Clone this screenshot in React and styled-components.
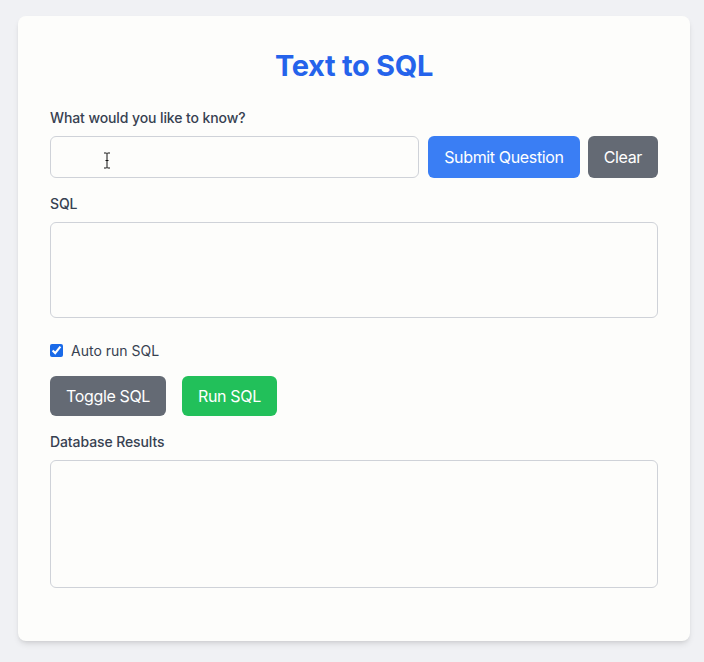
import React, { useState } from 'react';
import styled, { createGlobalStyle } from 'styled-components';

const GlobalStyle = createGlobalStyle`
  body {
    margin: 0;
    padding: 0;
    background: #f0f1f4;
    font-family: Inter, 'Liberation Sans', sans-serif;
    color: #374151;
  }
  * { box-sizing: border-box; }
`;

const Page = styled.div`
  padding: 16px 14px 20px 18px;
  min-height: 662px;
`;

const Card = styled.div`
  max-width: 672px;
  margin: 0 auto;
  background: #fdfdfb;
  border-radius: 8px;
  box-shadow: 0 4px 6px -1px rgba(0, 0, 0, 0.1), 0 2px 4px -2px rgba(0, 0, 0, 0.1);
  padding: 32px 32px 53px;
`;

const Title = styled.h1`
  margin: 0 0 24px;
  text-align: center;
  font-size: 29px;
  line-height: 36px;
  font-weight: 700;
  letter-spacing: -0.3px;
  color: #2563eb;
`;

const Label = styled.div`
  font-size: 14px;
  line-height: 20px;
  font-weight: 500;
  letter-spacing: -0.1px;
  color: #374151;
  margin-bottom: 8px;
`;

const Row = styled.div`
  display: flex;
  align-items: stretch;
  gap: ${p => p.$gap || 8}px;
  margin-bottom: ${p => p.$mb || 16}px;
`;

const InputWrap = styled.div`
  position: relative;
  flex: 1;
  margin-right: 1px;
`;

const Input = styled.input`
  width: 100%;
  height: 42px;
  border: 1px solid #cfd2d8;
  border-radius: 6px;
  background: #fdfdfb;
  padding: 0 12px;
  font: inherit;
  font-size: 16px;
  outline: none;
`;

const Cursor = styled.svg`
  position: absolute;
  left: 53px;
  top: 16px;
`;

const Button = styled.button`
  height: ${p => p.$h || 42}px;
  padding: 0 16px;
  border: none;
  border-radius: 6px;
  font-family: inherit;
  font-size: 16px;
  letter-spacing: -0.35px;
  color: #fff;
  cursor: pointer;
  background: ${p => p.$bg};
`;

const Area = styled.div`
  height: ${p => p.$h}px;
  border: 1px solid #cfd2d8;
  border-radius: 6px;
  background: #fdfdfb;
  margin-bottom: ${p => p.$mb || 0}px;
`;

const CheckRow = styled.label`
  display: flex;
  align-items: center;
  gap: 8px;
  height: 20px;
  font-size: 14px;
  color: #374151;
  margin-bottom: 16px;
`;

const Check = styled.input`
  width: 13px;
  height: 13px;
  margin: 0;
  accent-color: #1a6ae8;
`;

export default function App() {
  const [auto, setAuto] = useState(true);
  return (
    <>
      <GlobalStyle />
      <Page>
        <Card>
          <Title>Text to SQL</Title>
          <Label>What would you like to know?</Label>
          <Row>
            <InputWrap>
              <Input type="text" />
              <Cursor width="8" height="17" viewBox="0 0 8 17">
                <path d="M1 1h2.5l.5.6.5-.6H7M4 1.6v13.8M1 16h2.5l.5-.6.5.6H7M2.5 8.5h3" stroke="#111" strokeWidth="1" fill="none" />
              </Cursor>
            </InputWrap>
            <Button $bg="#3a7ef4">Submit Question</Button>
            <Button $bg="#646a74">Clear</Button>
          </Row>
          <Label>SQL</Label>
          <Area $h={96} $mb={22} />
          <CheckRow>
            <Check type="checkbox" checked={auto} onChange={e => setAuto(e.target.checked)} />
            Auto run SQL
          </CheckRow>
          <Row $gap={16} $mb={16}>
            <Button $bg="#646a74" $h={40}>Toggle SQL</Button>
            <Button $bg="#22c05a" $h={40}>Run SQL</Button>
          </Row>
          <Label>Database Results</Label>
          <Area $h={128} />
        </Card>
      </Page>
    </>
  );
}
